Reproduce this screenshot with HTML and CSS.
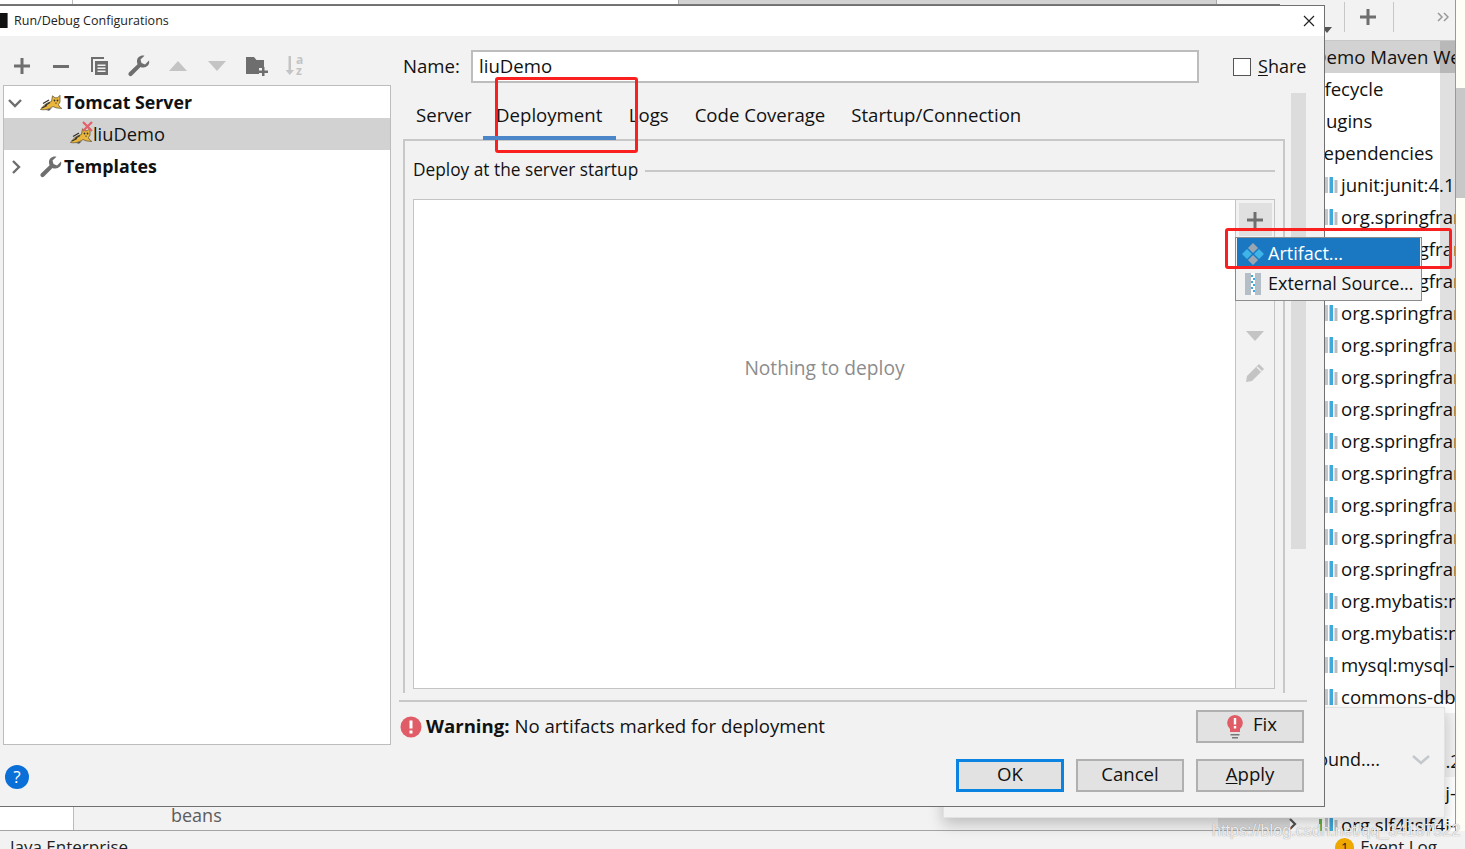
FILE: index.html
```html
<!DOCTYPE html>
<html lang="en">
<head>
<meta charset="utf-8">
<title>Run/Debug Configurations</title>
<link rel="stylesheet" href="styles.css">
</head>
<body>
<svg class="defs" width="0" height="0" aria-hidden="true">
  <symbol id="cat" viewBox="0 0 22 16">
    <path d="M.5 14.500 C3 10.500 7 7.500 11.500 6.500 L12.500 .8 L15 2.800 L17.500 2.800 L20 .3 L20 7 L18.500 9.500 L19 11 L21.800 13.500 L16 12.800 L13 11.500 C10 13.500 6 15.500 .5 14.500 Z" fill="#eab63c" stroke="#6b5a33" stroke-width=".8"/>
    <path d="M3 8.500 L9 5 M5 10.500 L10 7.500 M2 13 L7 10.500" stroke="#333" stroke-width="1.300" fill="none"/>
    <path d="M6 15 L12 13 L9 15.800 Z" fill="#4a4a4a"/>
    <circle cx="14.500" cy="5.500" r=".9" fill="#333"/><circle cx="17.500" cy="5.500" r=".9" fill="#333"/>
    <path d="M15 7.800 L17 7.800 L16 9 Z" fill="#333"/>
  </symbol>
  <symbol id="wrench" viewBox="0 0 22 22">
    <path d="M21 5.500 L17 9.500 L13.500 8 L12.500 4.500 L16.500 .8 C13 -.3 8.800 2.200 9 6.500 C9 7.600 9.300 8.400 9.600 9.200 L1 17.500 C.2 18.300 .2 19.600 1 20.500 C1.900 21.400 3.200 21.400 4 20.500 L12.500 12 C13.400 12.400 14.400 12.600 15.500 12.500 C19.500 12.200 22 9 21 5.500 Z" fill="#6e6e6e"/>
  </symbol>
  <symbol id="bars" viewBox="0 0 13 18">
    <rect x="0" y="1" width="3" height="16" fill="#c3c7ca"/>
    <rect x="4.500" y="1" width="3.500" height="16" fill="#3fa9dc"/>
    <rect x="9.500" y="4" width="3" height="13" fill="#b9bdc0"/>
  </symbol>
  <symbol id="bars-green" viewBox="0 0 19 18">
    <rect x="0" y="3" width="3" height="14" fill="#62b543"/>
    <rect x="6" y="1" width="3" height="16" fill="#c3c7ca"/>
    <rect x="10.500" y="1" width="3.500" height="16" fill="#3fa9dc"/>
    <rect x="15.500" y="4" width="3" height="13" fill="#b9bdc0"/>
  </symbol>
</svg>

<div class="ide">
  <div class="ide-main">
    <div class="editor-tabs">
      <span class="etab etab-white"></span>
      <span class="etab etab-light"></span>
      <span class="etab etab-grey"></span>
      <span class="etab etab-pale"></span>
    </div>
    <div class="editor-body"></div>
    <div class="bottom-tabs">
      <span class="bt-white"></span>
      <span class="bt-label">beans</span>
      <span class="bt-scroll"></span>
    </div>
  </div>

  <aside class="maven">
    <div class="maven-tools">
      <svg class="mt-arrow" width="10" height="6" viewBox="0 0 10 6"><path d="M0 0h10L5 6z" fill="#555"/></svg>
      <span class="mt-sep"></span>
      <svg class="mt-plus" width="16" height="16" viewBox="0 0 16 16"><path d="M6.500 0h3v6.500h6.500v3H9.500V16h-3V9.500H0v-3h6.500z" fill="#6e6e6e"/></svg>
      <span class="mt-sep"></span>
      <svg class="mt-more" width="12" height="10" viewBox="0 0 12 10"><path d="M1 1l4 4-4 4M7 1l4 4-4 4" fill="none" stroke="#999" stroke-width="1.500"/></svg>
    </div>
    <div class="maven-list">
      <div class="mrow mrow-sel"><span class="mtext">Demo Maven Webapp</span></div>
      <div class="mrow"><span class="mtext">Lifecycle</span></div>
      <div class="mrow"><span class="mtext">Plugins</span></div>
      <div class="mrow"><span class="mtext">Dependencies</span></div>
      <div class="mrow mdep"><svg class="dep"><use href="#bars"/></svg>junit:junit:4.11</div>
      <div class="mrow mdep"><svg class="dep"><use href="#bars"/></svg>org.springframework</div>
      <div class="mrow mdep"><svg class="dep"><use href="#bars"/></svg>org.springframework</div>
      <div class="mrow mdep"><svg class="dep"><use href="#bars"/></svg>org.springframework</div>
      <div class="mrow mdep"><svg class="dep"><use href="#bars"/></svg>org.springframework</div>
      <div class="mrow mdep"><svg class="dep"><use href="#bars"/></svg>org.springframework</div>
      <div class="mrow mdep"><svg class="dep"><use href="#bars"/></svg>org.springframework</div>
      <div class="mrow mdep"><svg class="dep"><use href="#bars"/></svg>org.springframework</div>
      <div class="mrow mdep"><svg class="dep"><use href="#bars"/></svg>org.springframework</div>
      <div class="mrow mdep"><svg class="dep"><use href="#bars"/></svg>org.springframework</div>
      <div class="mrow mdep"><svg class="dep"><use href="#bars"/></svg>org.springframework</div>
      <div class="mrow mdep"><svg class="dep"><use href="#bars"/></svg>org.springframework</div>
      <div class="mrow mdep"><svg class="dep"><use href="#bars"/></svg>org.springframework</div>
      <div class="mrow mdep"><svg class="dep"><use href="#bars"/></svg>org.mybatis:mybatis</div>
      <div class="mrow mdep"><svg class="dep"><use href="#bars"/></svg>org.mybatis:mybatis</div>
      <div class="mrow mdep"><svg class="dep"><use href="#bars"/></svg>mysql:mysql-connector</div>
      <div class="mrow mdep"><svg class="dep"><use href="#bars"/></svg>commons-dbcp</div>
      <div class="mrow mrow-grey"></div>
      <div class="mrow mrow-grey mrow-end"><span class="mrow-tail">javax.servlet:jstl:1.2</span></div>
      <div class="mrow mdep"><svg class="dep"><use href="#bars"/></svg>org.slf4j:slf4j-api</div>
      <div class="mrow mdep mrow-last">
        <svg class="last-chevron" width="8" height="12" viewBox="0 0 8 12"><path d="M1 1l5 5-5 5" fill="none" stroke="#555" stroke-width="2.200"/></svg>
        <svg class="dep dep-green"><use href="#bars-green"/></svg>org.slf4j:slf4j-log4j
      </div>
    </div>
    <div class="maven-scroll"></div>
  </aside>

  <div class="stripe">
    <span class="stripe-thumb"></span>
  </div>

  <footer class="status">
    <span class="status-left">Java Enterprise</span>
    <span class="status-right"><span class="badge">1</span>Event Log</span>
  </footer>
</div>

<div class="bg-popup">
  <span class="bg-popup-text">Background....</span>
  <svg width="18" height="10" viewBox="0 0 18 10"><path d="M1 1l8 7 8-7" fill="none" stroke="#c4c8cc" stroke-width="2.500"/></svg>
</div>

<section class="dialog">
  <header class="dlg-title">
    <span class="dlg-logo"></span>
    <span class="dlg-title-text">Run/Debug Configurations</span>
    <svg class="dlg-close" width="12" height="12" viewBox="0 0 12 12"><path d="M1 1l10 10M11 1L1 11" stroke="#222" stroke-width="1.200"/></svg>
  </header>

  <div class="dlg-body">
    <div class="left">
      <div class="left-tools">
        <span class="tool"><svg width="16" height="16" viewBox="0 0 16 16"><path d="M6.500 0h3v6.500H16v3H9.500V16h-3V9.500H0v-3h6.500z" fill="#6e6e6e"/></svg></span>
        <span class="tool"><svg width="16" height="3" viewBox="0 0 16 3"><rect width="16" height="3" fill="#6e6e6e"/></svg></span>
        <span class="tool"><svg width="20" height="20" viewBox="0 0 20 20"><path d="M1 1h13v2H3v13H1z" fill="#6e6e6e"/><path d="M5 5h13v14H5z" fill="#6e6e6e"/><path d="M7.500 8.500h8v1.500h-8zM7.500 11.500h8V13h-8zM7.500 14.500h8V16h-8z" fill="#f2f2f2"/></svg></span>
        <span class="tool"><svg width="22" height="22"><use href="#wrench"/></svg></span>
        <span class="tool"><svg width="18" height="10" viewBox="0 0 18 10"><path d="M0 10L9 0l9 10z" fill="#c4c4c4"/></svg></span>
        <span class="tool"><svg width="18" height="10" viewBox="0 0 18 10"><path d="M0 0l9 10 9-10z" fill="#c4c4c4"/></svg></span>
        <span class="tool tool-folder"><svg width="22" height="20" viewBox="0 0 22 20"><path d="M0 1h8l2.500 3H18v8h-5v6H0z" fill="#6e6e6e"/><path d="M16 11h2.500v3.500H22V17h-3.500v3H16v-3h-3v-2.500h3z" fill="#6e6e6e"/></svg></span>
        <span class="tool"><svg width="20" height="22" viewBox="0 0 20 22"><path d="M3.500 1h2.500v14h3l-4.200 5L.5 15h3z" fill="#c4c4c4"/><text x="11" y="9" class="sort-a">a</text><text x="11" y="20" class="sort-a">z</text></svg></span>
      </div>
      <div class="tree">
        <div class="tree-row tree-bold">
          <svg class="twisty" width="14" height="9" viewBox="0 0 14 9"><path d="M1 1l6 6 6-6" fill="none" stroke="#6e6e6e" stroke-width="2.400"/></svg>
          <svg class="tree-icon" width="22" height="16"><use href="#cat"/></svg>
          Tomcat Server
        </div>
        <div class="tree-row tree-child tree-sel">
          <span class="cat-x">
            <svg class="cat-img" width="22" height="16"><use href="#cat"/></svg>
            <svg class="red-x" width="11" height="11" viewBox="0 0 11 11"><path d="M1 1l9 9M10 1l-9 9" stroke="#e4606a" stroke-width="2.200"/></svg>
          </span>
          liuDemo
        </div>
        <div class="tree-row tree-bold tree-closed">
          <svg class="twisty" width="9" height="14" viewBox="0 0 9 14"><path d="M1 1l6 6-6 6" fill="none" stroke="#6e6e6e" stroke-width="2.400"/></svg>
          <svg class="tree-icon" width="22" height="22"><use href="#wrench"/></svg>
          Templates
        </div>
      </div>
      <div class="help"><span class="help-btn">?</span></div>
    </div>

    <div class="right">
      <div class="name-row">
        <label class="name-label">Name:</label>
        <div class="name-input">liuDemo</div>
        <span class="share"><span class="check"></span><span><u>S</u>hare</span></span>
      </div>

      <div class="center">
        <div class="center-main">
          <nav class="tabs">
            <span class="tab">Server</span>
            <span class="tab tab-active">Deployment</span>
            <span class="tab">Logs</span>
            <span class="tab">Code Coverage</span>
            <span class="tab">Startup/Connection</span>
          </nav>
          <div class="panel">
            <div class="legend"><span>Deploy at the server startup</span><i class="legend-line"></i></div>
            <div class="deploy">
              <div class="deploy-empty">Nothing to deploy</div>
              <div class="deploy-tools">
                <span class="dt dt-hover"><svg width="16" height="16" viewBox="0 0 16 16"><path d="M6.500 0h3v6.500H16v3H9.500V16h-3V9.500H0v-3h6.500z" fill="#6e6e6e"/></svg></span>
                <span class="dt dt-gap"><svg width="18" height="10" viewBox="0 0 18 10"><path d="M0 0l9 10 9-10z" fill="#c4c4c4"/></svg></span>
                <span class="dt dt-pencil"><svg width="20" height="20" viewBox="0 0 20 20"><path d="M14 1l5 5L7 18l-6 1 1-6z" fill="#c4c4c4"/><path d="M12 4l4.500 4.500" stroke="#f2f2f2" stroke-width="1.200"/></svg></span>
              </div>
            </div>
          </div>
        </div>
        <div class="vscroll"></div>
      </div>

      <div class="warn">
        <svg class="warn-icon" width="22" height="22" viewBox="0 0 22 22"><circle cx="11" cy="11" r="10.500" fill="#e05c66"/><path d="M9.500 4.500h3v8h-3zM9.500 14.500h3v3h-3z" fill="#fff"/></svg>
        <span class="warn-text"><b>Warning:</b> No artifacts marked for deployment</span>
        <span class="btn btn-fix">
          <svg width="16" height="24" viewBox="0 0 16 24"><path d="M8 0a8 8 0 0 1 5 14v3H3v-3A8 8 0 0 1 8 0z" fill="#e05c66"/><path d="M6.800 3h2.400v6.500H6.800zM6.800 11h2.400v2.500H6.800z" fill="#fff"/><path d="M3.500 19h9v1.500h-9zM5 22h6v1.500H5z" fill="#777"/></svg>
          <span class="fix-label">Fix</span>
        </span>
      </div>
      <div class="actions">
        <span class="btn btn-default">OK</span>
        <span class="btn">Cancel</span>
        <span class="btn"><span><u>A</u>pply</span></span>
      </div>
    </div>
  </div>
</section>

<div class="menu">
  <div class="menu-item menu-sel">
    <svg width="22" height="22" viewBox="0 0 22 22"><path d="M11 0l5 5-5 5-5-5z" fill="#9aa7b2"/><path d="M5 6l5 5-5 5-5-5zM17 6l5 5-5 5-5-5z" fill="#3fb4e8"/><path d="M11 12l5 5-5 5-5-5z" fill="#9aa7b2"/></svg>
    Artifact...
  </div>
  <div class="menu-item">
    <svg width="16" height="22" viewBox="0 0 16 22"><rect width="16" height="22" fill="#b4bec6"/><rect x="6" width="4" height="22" fill="#fff"/><path d="M6 2h2v2H6zM8 5h2v2H8zM6 8h2v2H6zM8 11h2v2H8zM6 14h2v2H6zM8 17h2v2H8z" fill="#3fa9dc"/></svg>
    External Source...
  </div>
</div>

<div class="mark mark-tab"></div>
<div class="mark mark-menu"></div>
<div class="watermark">https://blog.csdn.net/qq_34187522</div>
</body>
</html>
```

FILE: styles.css
```css
* { box-sizing: border-box; }
html, body { margin: 0; padding: 0; width: 1465px; height: 849px; overflow: hidden; }
body { position: relative; background: #f2f2f2; color: #111; font: 18.6px/1.2 "Open Sans", "Noto Sans", sans-serif; }
.defs { position: absolute; }
u { text-underline-offset: 2px; }

/* IDE behind the dialog */
.ide { display: grid; grid-template-columns: 1280px 175px 10px; grid-template-rows: 831px 18px; width: 1465px; height: 849px; }
.ide-main { display: flex; flex-direction: column; }
.editor-tabs { display: flex; height: 5px; border-bottom: 1px solid #777; }
.etab-white { width: 73px; background: #fff; border-right: 1px solid #bbb; }
.etab-light { width: 605px; background: #fff; }
.etab-grey { width: 539px; background: #d2d2d2; border-left: 1px solid #aaa; border-right: 1px solid #aaa; }
.etab-pale { flex: 1; background: #f2f2f2; }
.editor-body { flex: 1; background: #fff; }
.bottom-tabs { display: flex; align-items: center; height: 25px; padding-bottom: 4px; background: #f2f2f2; border-bottom: 1px solid #a4a4a4; font-size: 18px; }
.bt-white { width: 74px; align-self: stretch; margin-bottom: -4px; background: #fff; border-right: 1px solid #bbb; }
.bt-label { margin-left: 97px; color: #5c5c5c; }
.bt-scroll { margin-left: auto; width: 62px; align-self: stretch; margin-bottom: -4px; background: #dcdcdc; }

.maven { position: relative; overflow: hidden; display: flex; flex-direction: column; background: #fff; }
.maven-tools { display: flex; align-items: center; height: 41px; padding: 0 0 6px 42px; background: #f2f2f2; border-bottom: 1px solid #c8c8c8; flex: none; }
.mt-arrow { margin-top: 26px; }
.mt-sep { width: 1px; height: 30px; background: #c8c8c8; margin-left: 12px; }
.mt-plus { margin-left: 15px; margin-right: 17px; }
.mt-plus + .mt-sep { margin-left: 0; }
.mt-more { margin-left: 43px; }
.maven-list { flex: none; }
.mrow { display: flex; align-items: center; height: 32px; padding-left: 30px; white-space: nowrap; }
.mrow-sel { padding-left: 33px; background: #d2d2d2; }
.mdep { padding-left: 45px; }
.dep { width: 13px; height: 18px; margin-right: 3px; flex: none; }
.dep-green { width: 19px; margin-left: -6px; }
.mrow-grey { background: #f2f2f2; }
.mrow-end { justify-content: flex-end; padding-left: 0; }
.mrow-tail { margin-right: -6px; }
.mrow-last { position: relative; background: linear-gradient(90deg, #dcdcdc 10px, #fff 10px); }
.last-chevron { position: absolute; left: 9px; top: 9px; }
.maven-scroll { position: absolute; right: 0; top: 41px; width: 15px; height: 659px; background: rgba(0, 0, 0, .12); }

.stripe { background: #fffef6; border-left: 1px solid #999; padding-top: 88px; }
.stripe-thumb { display: block; height: 110px; background: #c8c8c8; }

.status { grid-column: 1 / -1; display: flex; justify-content: space-between; padding: 6px 0 0 10px; font-size: 17px; line-height: 20px; color: #222; overflow: hidden; background: #f2f2f2; }
.status-right { display: flex; align-items: center; gap: 6px; padding-right: 28px; height: 20px; }
.badge { display: inline-flex; align-items: center; justify-content: center; width: 19px; height: 19px; border-radius: 50%; background: #eea800; color: #222; font-size: 13px; }

.bg-popup { position: absolute; left: 943px; top: 707px; width: 502px; height: 111px; display: flex; align-items: center; justify-content: flex-end; gap: 32px; padding-right: 14px; padding-bottom: 6px; background: #f2f2f2; border: 1px solid #e2e2e2; box-shadow: 0 6px 14px rgba(0, 0, 0, .22); font-size: 18px; }

/* Dialog */
.dialog { position: absolute; left: 0; top: 5px; width: 1325px; height: 802px; display: flex; flex-direction: column; background: #f2f2f2; border: 1px solid #707070; border-left: 0; }
.dlg-title { display: flex; align-items: center; height: 30px; padding-bottom: 1px; background: #fff; flex: none; }
.dlg-logo { width: 8px; height: 15px; background: #111; border-right: 1px solid #2a7fd0; }
.dlg-title-text { margin-left: 6px; font-size: 12.500px; color: #222; }
.dlg-close { margin-left: auto; margin-right: 9px; }
.dlg-body { flex: 1; display: flex; min-height: 0; }

.left { width: 391px; padding-left: 3px; display: flex; flex-direction: column; flex: none; }
.left-tools { display: flex; align-items: center; height: 30px; margin: 15px 0 4px -1px; }
.tool { width: 39px; display: flex; justify-content: center; }
.tool-folder { margin: 0 -1px 0 1px; }
.sort-a { font-size: 12px; font-weight: 700; fill: #c4c4c4; font-family: "Open Sans", sans-serif; }
.tree { height: 660px; background: #fff; border: 1px solid #bdbdbd; flex: none; }
.tree-row { display: flex; align-items: center; height: 32px; padding: 2px 0 0 4px; }
.tree-bold { font-weight: 700; font-size: 17.800px; }
.twisty { flex: none; margin-right: 18px; }
.tree-closed { padding-left: 8px; }
.tree-closed .twisty { margin-right: 19px; }
.tree-icon { margin-right: 2px; flex: none; }
.tree-child { padding: 0 0 0 66px; font-size: 18.300px; }
.tree-sel { background: #d2d2d2; }
.cat-x { position: relative; display: inline-flex; align-items: flex-end; width: 23px; height: 20px; }
.red-x { position: absolute; left: 12px; top: -3px; }
.help { padding: 20px 0 0 2px; }
.help-btn { display: flex; align-items: center; justify-content: center; width: 24px; height: 24px; border-radius: 50%; background: #0a6fd6; color: #fff; font-size: 17px; }

.right { flex: 1; display: flex; flex-direction: column; padding-left: 12px; min-width: 0; }
.name-row { display: flex; align-items: center; height: 33px; margin-top: 14px; flex: none; }
.name-label { width: 68px; }
.name-input { width: 728px; height: 33px; padding: 3px 6px 0; background: #fff; border: 2px solid #bdbdbd; }
.share { display: flex; align-items: center; gap: 7px; margin-left: 34px; font-size: 18px; }
.check { width: 18px; height: 18px; background: #fff; border: 1px solid #555; display: block; }

.center { flex: none; display: flex; height: 600px; margin-top: 10px; }
.center-main { width: 882px; display: flex; flex-direction: column; }
.tabs { display: flex; height: 47px; padding-left: 13px; flex: none; }
.tab { display: flex; align-items: center; height: 47px; padding: 0 13px 3px; }
.tab:first-child { padding: 0 11px 3px 0; }
.tab-active { position: relative; z-index: 1; padding: 1px 13.500px 0; border-bottom: 4px solid #4a86c8; }
.panel { flex: 1; display: flex; flex-direction: column; margin-top: -1px; padding: 16px 8px 4px 8px; border: 2px solid #c8c8c8; border-bottom: 0; }
.legend { display: flex; align-items: center; gap: 7px; height: 26px; flex: none; font-size: 17.300px; }
.legend-line { flex: 1; height: 2px; margin-top: 2px; background: #c8c8c8; display: block; }
.deploy { flex: 1; margin-top: 16px; display: flex; background: #fff; border: 1px solid #c4c4c4; min-height: 0; }
.deploy-empty { flex: 1; display: flex; align-items: center; justify-content: center; padding-bottom: 152px; color: #8c8c8c; font-size: 19.200px; }
.deploy-tools { width: 39px; display: flex; flex-direction: column; align-items: center; padding-top: 3px; background: #f2f2f2; border-left: 1px solid #c4c4c4; }
.dt { width: 33px; height: 33px; display: flex; align-items: center; justify-content: center; margin-bottom: 5px; flex: none; }
.dt-hover { background: #e0e0e0; }
.dt-gap { margin-top: 78px; }
.dt-pencil { margin-top: -1px; }
.vscroll { width: 15px; height: 456px; margin-left: 6px; background: #dcdcdc; }

.warn { display: flex; align-items: center; height: 51px; margin-left: -4px; width: 908px; border-top: 2px solid #c8c8c8; margin-top: 7px; flex: none; }
.warn-icon { margin-left: 1px; margin-top: 1px; flex: none; }
.warn-text { margin-left: 4px; }
.btn { display: flex; align-items: center; justify-content: center; gap: 10px; width: 108px; height: 33px; background: #e2e2e2; border: 2px solid #b0b0b0; flex: none; }
.btn-fix { margin-left: auto; margin-right: 3px; padding-left: 4px; }
.fix-label { margin-top: -4px; }
.actions { display: flex; gap: 12px; margin-top: 8px; width: 905px; justify-content: flex-end; margin-left: -4px; flex: none; }
.actions .btn { padding-bottom: 3px; }
.actions .btn-default { border: 3px solid #0a84e0; padding-bottom: 3px; }

/* Popup menu over the dialog */
.menu { position: absolute; left: 1235px; top: 237px; width: 187px; height: 64px; padding: 0 1px; background: #f2f2f2; border: 1px solid #8c8c8c; font-size: 18px; }
.menu-item { display: flex; align-items: center; gap: 4px; height: 30px; padding: 2px 0 0 5px; white-space: nowrap; }
.menu-sel { background: #1a78c2; color: #fff; }
.menu-item:last-child svg { margin: 0 3px; }

/* Annotation marks */
.mark { position: absolute; border: 3px solid #fb2020; border-radius: 3px; }
.mark-tab { left: 495px; top: 77px; width: 143px; height: 76px; }
.mark-menu { left: 1225px; top: 228px; width: 227px; height: 41px; }
.watermark { position: absolute; left: 1212px; top: 820px; color: rgba(255, 255, 255, .85); font: 16.200px/20px "Liberation Sans", sans-serif; text-shadow: 0 0 1px rgba(100, 100, 100, .8); white-space: nowrap; }
```
